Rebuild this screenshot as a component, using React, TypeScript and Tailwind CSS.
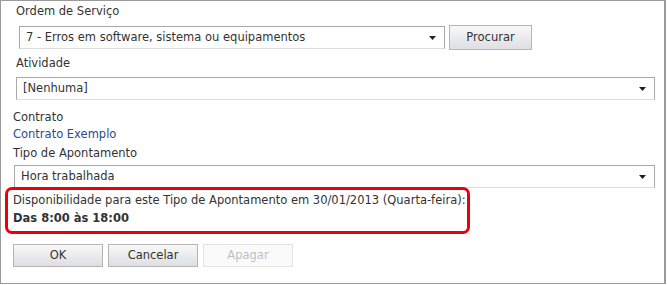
import React from 'react';

function Arrow() {
  return (
    <svg width="7" height="4" viewBox="0 0 7 4" className="shrink-0">
      <path d="M0 0 H7 L3.5 4 Z" fill="#222" />
    </svg>
  );
}

function Select({ value, className }: { value: string; className: string }) {
  return (
    <div
      className={`flex h-[23px] items-center justify-between border border-[#a9a9a9] border-b-[#dcdcdc] bg-white pl-[6px] pr-[8px] ${className}`}
    >
      <span>{value}</span>
      <Arrow />
    </div>
  );
}

function Button({ label, disabled }: { label: string; disabled?: boolean }) {
  return disabled ? (
    <div className="flex h-[23px] w-[90px] items-center justify-center border border-[#e3e3e3] bg-[#fafafa] text-[#c0c0c0]">
      {label}
    </div>
  ) : (
    <div className="flex h-[23px] w-[90px] items-center justify-center border border-[#b5b5b5] bg-gradient-to-b from-[#f8f8f8] to-[#dedfe3] text-[#333]">
      {label}
    </div>
  );
}

export default function App() {
  return (
    <div className="h-[285px] w-[667px] whitespace-nowrap bg-white text-[11.5px] leading-[13px] text-[#333] [font-family:'DejaVu_Sans',Verdana,sans-serif]">
      <div className="h-[284px] w-[666px] border border-r-2 border-[#9a9a9a] pt-[4px]">
        {/* Ordem de Serviço */}
        <div className="pl-[15px]">Ordem de Serviço</div>
        <div className="mt-[7px] flex items-center pl-[18px]">
          <Select value="7 - Erros em software, sistema ou equipamentos" className="w-[426px]" />
          <div className="ml-[4px] flex h-[25px] w-[83px] items-center justify-center border border-[#b5b5b5] bg-gradient-to-b from-[#f8f8f8] to-[#dedfe3]">
            Procurar
          </div>
        </div>

        {/* Atividade */}
        <div className="mt-[7px] pl-[15px]">Atividade</div>
        <div className="mt-[7px] pl-[15px]">
          <Select value="[Nenhuma]" className="w-[639px]" />
        </div>

        {/* Contrato */}
        <div className="mt-[11px] pl-[12px]">Contrato</div>
        <div className="mt-[4px] pl-[12px] text-[#2a4b8d]">Contrato Exemplo</div>

        {/* Tipo de Apontamento */}
        <div className="mt-[6px] pl-[12px]">Tipo de Apontamento</div>
        <div className="mt-[5px] pl-[13px]">
          <Select value="Hora trabalhada" className="h-[22px] w-[641px]" />
        </div>

        {/* Disponibilidade */}
        <div className="-mt-[1px] ml-[4px] w-[465px] rounded-[7px] border-[3px] border-[#e8000b] px-[5px] pb-[6px] pt-[4px]">
          <div>Disponibilidade para este Tipo de Apontamento em 30/01/2013 (Quarta-feira):</div>
          <div className="mt-[5px] font-bold">Das 8:00 às 18:00</div>
        </div>

        {/* Ações */}
        <div className="mt-[10px] flex gap-[5px] pl-[12px]">
          <Button label="OK" />
          <Button label="Cancelar" />
          <Button label="Apagar" disabled />
        </div>
      </div>
    </div>
  );
}
